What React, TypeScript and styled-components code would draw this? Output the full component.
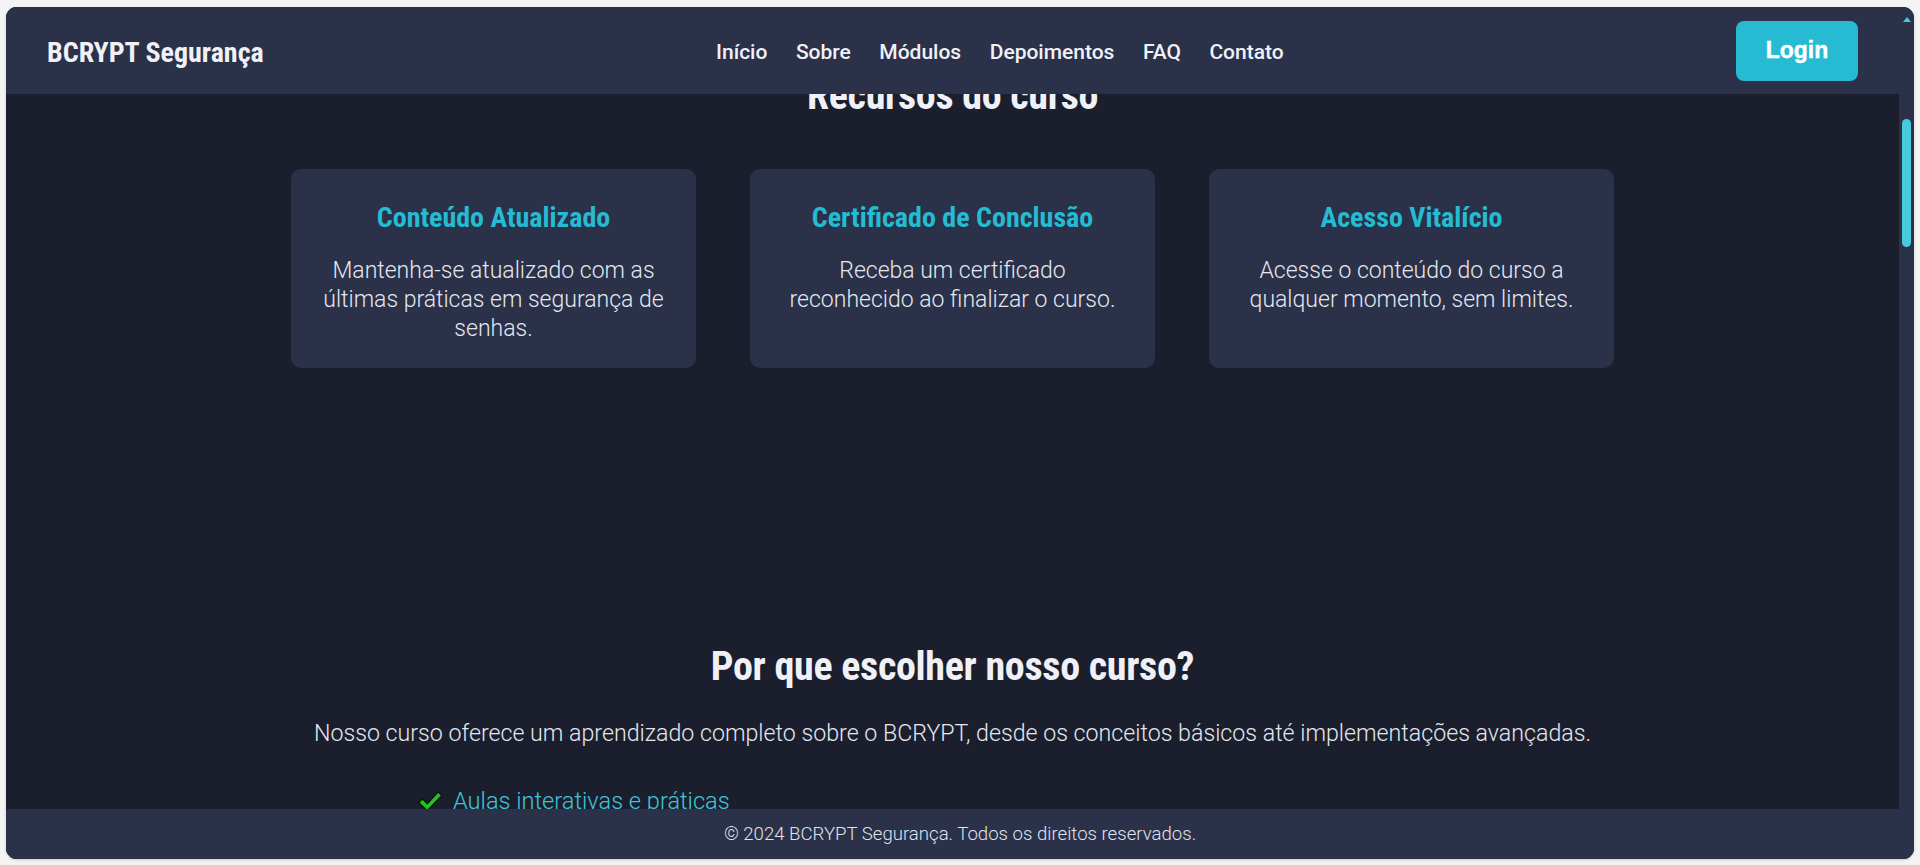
import React, { useLayoutEffect, useRef } from "react";
import styled, { createGlobalStyle } from "styled-components";

const HEAD = `"Roboto Condensed", "DejaVu Sans Condensed", "Liberation Sans", sans-serif`;
const BODY = `Roboto, "Liberation Sans", sans-serif`;

const GlobalStyle = createGlobalStyle`
  html, body { margin: 0; padding: 0; height: 100%; background: #f3f3f3; }
  #root { height: 100%; }
  * { box-sizing: border-box; }
`;

const Page = styled.div`
  height: 100vh;
  padding: 7px 6px 6px 6px;
`;

const Frame = styled.div`
  position: relative;
  height: 100%;
  display: flex;
  border-radius: 11px;
  overflow: hidden;
  background: #2a3149;
  box-shadow: 0 1px 3px rgba(0, 0, 0, 0.18);
`;

const Scroller = styled.div`
  flex: 1;
  min-width: 0;
  height: 100%;
  overflow-y: scroll;
  scrollbar-width: none;
  background: #1b1f2d;
  color: #eef0f6;
  &::-webkit-scrollbar { display: none; }
`;

const Rail = styled.div`
  width: 15px;
  flex: none;
  display: flex;
  flex-direction: column;
  align-items: center;
  background: #2a3149;
`;

const RailArrow = styled.div`
  margin-top: 10px;
  width: 0;
  height: 0;
  border-left: 4.5px solid transparent;
  border-right: 4.5px solid transparent;
  border-bottom: 5px solid #48c9dc;
`;

const RailThumb = styled.div`
  margin-top: 97px;
  width: 9px;
  height: 128px;
  border-radius: 5px;
  background: #48c9dc;
`;

const Header = styled.header`
  position: sticky;
  top: 0;
  z-index: 5;
  height: 87px;
  padding: 0 41px;
  display: flex;
  align-items: center;
  justify-content: space-between;
  background: #2a3149;
`;

const Logo = styled.div`
  padding-top: 4px;
  font-family: ${HEAD};
  font-weight: 700;
  font-size: 28px;
  color: #f0f1f7;
`;

const Nav = styled.nav`
  padding-top: 3px;
  display: flex;
  gap: 28.5px;
`;

const NavLink = styled.a`
  font-family: ${BODY};
  font-weight: 500;
  font-size: 21px;
  color: #f0f1f7;
  text-decoration: none;
`;

const LoginButton = styled.button`
  border: none;
  border-radius: 8px;
  background: #26bbd2;
  color: #ffffff;
  font-family: "Liberation Sans", Arial, sans-serif;
  font-weight: 700;
  font-size: 23px;
  -webkit-text-stroke: 0.4px #ffffff;
  width: 122px;
  height: 60px;
`;

const Section = styled.section<{ $pt?: number; $pb?: number }>`
  padding: ${(p) => p.$pt ?? 80}px 40px ${(p) => p.$pb ?? 80}px;
  text-align: center;
`;

const SectionTitle = styled.h2<{ $mb?: number }>`
  margin: 0 0 ${(p) => p.$mb ?? 40}px;
  font-family: ${HEAD};
  font-weight: 700;
  font-size: 40px;
  line-height: 48px;
  letter-spacing: -0.3px;
  color: #f0f1f7;
`;

const Lead = styled.p`
  margin: 0 auto;
  max-width: 1400px;
  font-family: ${BODY};
  font-weight: 300;
  font-size: 23.2px;
  line-height: 34.5px;
  color: #e4e7ef;
`;

const CardGrid = styled.div`
  width: 1323px;
  margin: 0 auto;
  display: grid;
  grid-template-columns: repeat(3, 1fr);
  gap: 54px;
`;

const Card = styled.div`
  background: #2a3149;
  border-radius: 10px;
  padding: 32px 29px 25px;
  text-align: center;
`;

const CardTitle = styled.h3`
  margin: 0 0 21px;
  font-family: ${HEAD};
  font-weight: 700;
  font-size: 28px;
  line-height: 34px;
  color: #25bcd3;
`;

const CardText = styled.p`
  margin: 0;
  font-family: ${BODY};
  font-weight: 300;
  font-size: 23px;
  line-height: 29px;
  color: #e4e7ef;
`;

const CheckList = styled.ul`
  list-style: none;
  margin: 36px auto 0;
  padding: 0;
  width: 1071px;
  display: flex;
  flex-direction: column;
  gap: 16px;
  text-align: left;
`;

const CheckItem = styled.li`
  display: flex;
  align-items: center;
  gap: 10px;
  font-family: ${BODY};
  font-weight: 300;
  font-size: 23.6px;
  color: #3ec6dc;
`;

const Footer = styled.footer`
  position: absolute;
  left: 0;
  right: 0;
  bottom: 0;
  height: 50px;
  display: flex;
  align-items: center;
  justify-content: center;
  background: #2a3149;
  font-family: ${BODY};
  font-weight: 300;
  font-size: 18.6px;
  color: #e0e3ec;
  z-index: 6;
`;

const HeroTitle = styled.h1`
  margin: 0 0 20px;
  font-family: ${HEAD};
  font-weight: 700;
  font-size: 56px;
  color: #f0f1f7;
`;

const FaqItem = styled.div`
  max-width: 900px;
  margin: 0 auto 20px;
  padding: 20px 24px;
  background: #2a3149;
  border-radius: 10px;
  text-align: left;
`;

const Check = () => (
  <svg width="26" height="24" viewBox="0 0 24 22">
    <path
      d="M1.5 12.5 L5 9 L9.5 13.5 L19.5 2.5 L23 6 L9.5 20 Z"
      fill="#27c22a"
      stroke="#0b1a0b"
      strokeWidth="1.4"
      strokeLinejoin="round"
    />
  </svg>
);

const features = [
  { t: "Conteúdo Atualizado", d: "Mantenha-se atualizado com as últimas práticas em segurança de senhas." },
  { t: "Certificado de Conclusão", d: "Receba um certificado reconhecido ao finalizar o curso." },
  { t: "Acesso Vitalício", d: "Acesse o conteúdo do curso a qualquer momento, sem limites." },
];

const reasons = [
  "Aulas interativas e práticas",
  "Exemplos reais de implementação",
  "Suporte direto com instrutores",
  "Material complementar para download",
];

const modules = [
  "Introdução ao Hashing",
  "Como o BCRYPT funciona",
  "Salt e Cost Factor",
  "Implementação em Node.js",
  "Boas práticas de segurança",
  "Projeto final",
];

export default function App() {
  const scrollerRef = useRef<HTMLDivElement>(null);
  const gridRef = useRef<HTMLDivElement>(null);

  useLayoutEffect(() => {
    const s = scrollerRef.current;
    const g = gridRef.current;
    if (!s || !g) return;
    const delta = g.getBoundingClientRect().top - s.getBoundingClientRect().top - 162;
    s.scrollTop += delta;
  }, []);

  return (
    <>
      <GlobalStyle />
      <Page>
        <Frame>
          <Scroller ref={scrollerRef}>
            <Header>
              <Logo>BCRYPT Segurança</Logo>
              <Nav>
                <NavLink href="#inicio">Início</NavLink>
                <NavLink href="#sobre">Sobre</NavLink>
                <NavLink href="#modulos">Módulos</NavLink>
                <NavLink href="#depoimentos">Depoimentos</NavLink>
                <NavLink href="#faq">FAQ</NavLink>
                <NavLink href="#contato">Contato</NavLink>
              </Nav>
              <LoginButton>Login</LoginButton>
            </Header>

            <Section id="inicio" $pt={110} $pb={60}>
              <HeroTitle>Aprenda BCRYPT do zero</HeroTitle>
              <Lead>Proteja senhas com as melhores práticas de criptografia e hashing.</Lead>
            </Section>

            <Section id="sobre" $pt={60} $pb={60}>
              <SectionTitle>Sobre o curso</SectionTitle>
              <Lead>Um curso completo para desenvolvedores que querem armazenar senhas com segurança.</Lead>
            </Section>

            <Section $pt={60} $pb={137}>
              <SectionTitle $mb={49}>Recursos do curso</SectionTitle>
              <CardGrid ref={gridRef}>
                {features.map((f) => (
                  <Card key={f.t}>
                    <CardTitle>{f.t}</CardTitle>
                    <CardText>{f.d}</CardText>
                  </Card>
                ))}
              </CardGrid>
            </Section>

            <Section $pt={138} $pb={80}>
              <SectionTitle $mb={25}>Por que escolher nosso curso?</SectionTitle>
              <Lead>
                Nosso curso oferece um aprendizado completo sobre o BCRYPT, desde os conceitos básicos até
                implementações avançadas.
              </Lead>
              <CheckList>
                {reasons.map((r) => (
                  <CheckItem key={r}>
                    <Check />
                    {r}
                  </CheckItem>
                ))}
              </CheckList>
            </Section>

            <Section id="modulos">
              <SectionTitle>Módulos</SectionTitle>
              <CardGrid>
                {modules.map((m, i) => (
                  <Card key={m}>
                    <CardTitle>Módulo {i + 1}</CardTitle>
                    <CardText>{m}</CardText>
                  </Card>
                ))}
              </CardGrid>
            </Section>

            <Section id="depoimentos">
              <SectionTitle>Depoimentos</SectionTitle>
              <CardGrid>
                <Card>
                  <CardText>"Finalmente entendi como armazenar senhas corretamente."</CardText>
                </Card>
                <Card>
                  <CardText>"Conteúdo claro e direto ao ponto."</CardText>
                </Card>
                <Card>
                  <CardText>"Recomendo para qualquer desenvolvedor backend."</CardText>
                </Card>
              </CardGrid>
            </Section>

            <Section id="faq">
              <SectionTitle>FAQ</SectionTitle>
              {["O que é BCRYPT?", "Preciso saber programar?", "Quanto tempo dura o curso?", "Recebo certificado?"].map((q) => (
                <FaqItem key={q}>
                  <CardTitle>{q}</CardTitle>
                  <CardText>Resposta detalhada disponível no curso.</CardText>
                </FaqItem>
              ))}
            </Section>

            <Section id="contato" $pb={400}>
              <SectionTitle>Contato</SectionTitle>
              <Lead>Envie sua dúvida para contato@bcryptseguranca.com</Lead>
            </Section>
          </Scroller>
          <Rail>
            <RailArrow />
            <RailThumb />
          </Rail>
          <Footer>© 2024 BCRYPT Segurança. Todos os direitos reservados.</Footer>
        </Frame>
      </Page>
    </>
  );
}
